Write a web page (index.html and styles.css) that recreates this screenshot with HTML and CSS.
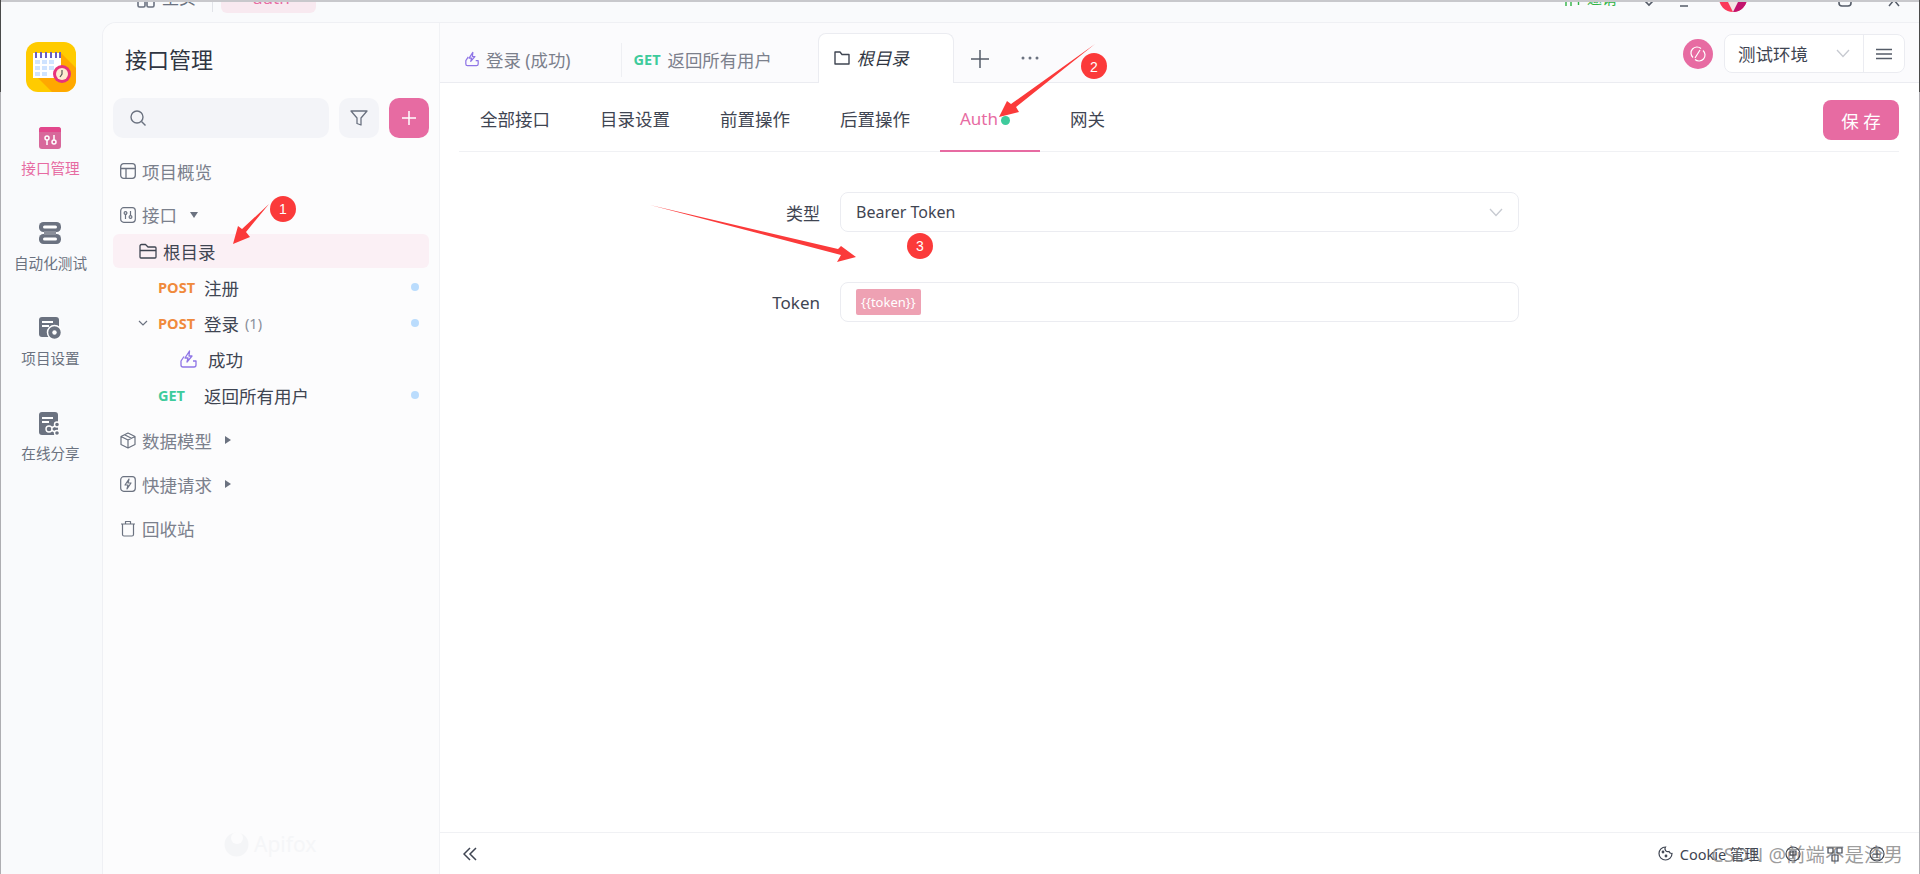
FILE: index.html
```html
<!DOCTYPE html>
<html lang="zh-CN">
<head>
  <meta charset="UTF-8" />
  <title>接口管理</title>
  <link rel="stylesheet" href="styles.css">
</head>
<body>
<div class="screen">

  <!-- window strip, cut off by the top of the shot -->
  <header class="topbar">
    <svg class="home-ico" width="18" height="24" viewBox="0 0 18 24" fill="none" stroke="#6b7280" stroke-width="1.6"><rect x="1" y="3" width="7" height="18" rx="1.5"/><rect x="10" y="3" width="7" height="18" rx="1.5"/></svg>
    <span class="top-home">主页</span>
    <i class="top-sep"></i>
    <span class="top-tab">auth</span>
    <svg class="top-add" width="18" height="24" viewBox="0 0 18 24" fill="none" stroke="#2fb344" stroke-width="1.4"><path d="M1 20v-8h5v8M10 15h7M13.500 11v8"/></svg>
    <span class="top-invite">邀请</span>
    <svg class="top-ico ico-a" width="20" height="24" viewBox="0 0 20 24" fill="none" stroke="#555c68" stroke-width="1.6"><path d="M3 12l7 7 7-7"/></svg>
    <svg class="top-ico ico-b" width="20" height="24" viewBox="0 0 20 24" fill="none" stroke="#555c68" stroke-width="1.6"><path d="M3 15h14M6 20h8"/></svg>
    <svg class="top-avatar" width="30" height="30" viewBox="0 0 30 30"><circle cx="15" cy="15" r="14" fill="#fb3a5a"/><path d="M15 1a14 14 0 0 1 0 28z" fill="#c2136e"/><path d="M9 17h12l-6 12z" fill="#f3e6e6"/></svg>
    <svg class="top-ico ico-c" width="16" height="24" viewBox="0 0 16 24" fill="none" stroke="#555c68" stroke-width="1.6"><rect x="2" y="4" width="12" height="16" rx="3"/></svg>
    <svg class="top-ico ico-d" width="14" height="24" viewBox="0 0 14 24" fill="none" stroke="#555c68" stroke-width="1.5"><path d="M2 20L7 14l5 6"/></svg>
  </header>

  <div class="shell">
    <!-- left rail -->
    <nav class="rail">
      <svg class="logo" width="50" height="50" viewBox="0 0 50 50">
        <rect width="50" height="50" rx="12" fill="#ffcb00"/>
        <path d="M34 10l16 16v12a12 12 0 0 1-12 12H26L7 31z" fill="#ffa800"/>
        <rect x="7" y="11" width="28" height="25" fill="#fff"/>
        <g fill="#cfe3ff"><rect x="9" y="18" width="5" height="4"/><rect x="16" y="18" width="5" height="4"/><rect x="23" y="18" width="5" height="4"/><rect x="9" y="24" width="5" height="4"/><rect x="16" y="24" width="5" height="4"/><rect x="23" y="24" width="5" height="4"/><rect x="9" y="30" width="5" height="4"/><rect x="16" y="30" width="5" height="4"/></g>
        <g fill="#6a5fc1"><rect x="9" y="10" width="2" height="6"/><rect x="14" y="10" width="2" height="6"/><rect x="19" y="10" width="2" height="6"/><rect x="24" y="10" width="2" height="6"/><rect x="29" y="10" width="2" height="6"/><rect x="33" y="10" width="2" height="6"/></g>
        <circle cx="36" cy="32" r="9" fill="#e8337a"/>
        <circle cx="36" cy="32" r="6" fill="#fdebd0"/>
        <path d="M36 28v4l-2 3" stroke="#555" stroke-width="1.2" fill="none"/>
      </svg>

      <a class="rail-item rail-on">
        <svg width="22" height="22" viewBox="0 0 22 22"><rect y="0" width="22" height="22" rx="3" fill="#d8689b"/><path d="M0 5V3a3 3 0 0 1 3-3h16a3 3 0 0 1 3 3v2z" fill="#e2478c"/><g stroke="#fff" stroke-width="1.5" fill="none"><circle cx="8" cy="11" r="2"/><path d="M8 13v5M15 8v5"/><circle cx="15" cy="15" r="2"/></g></svg>
        <span>接口管理</span>
      </a>
      <a class="rail-item">
        <svg width="22" height="22" viewBox="0 0 22 22"><rect width="22" height="10" rx="4.5" fill="#6b7280"/><rect y="12" width="22" height="10" rx="4.5" fill="#6b7280"/><rect x="4" y="3.500" width="14" height="3" rx="1.500" fill="#fff"/><rect x="4" y="15.500" width="14" height="3" rx="1.500" fill="#fff"/><rect x="5" y="9" width="12" height="4" fill="#8a8f9a"/></svg>
        <span>自动化测试</span>
      </a>
      <a class="rail-item">
        <svg width="22" height="22" viewBox="0 0 22 22"><rect width="20" height="20" rx="3" fill="#6b7280"/><rect x="3" y="4" width="11" height="2" fill="#fff"/><rect x="3" y="8" width="7" height="2" fill="#fff"/><circle cx="15.5" cy="15.5" r="7" fill="#6b7280" stroke="#fff" stroke-width="1.5"/><circle cx="15.5" cy="15.5" r="2.2" fill="#fff"/></svg>
        <span>项目设置</span>
      </a>
      <a class="rail-item rail-tall">
        <svg width="22" height="24" viewBox="0 0 22 24"><rect width="19" height="23" rx="3" fill="#6b7280"/><rect x="3" y="5" width="11" height="2" fill="#fff"/><rect x="3" y="9" width="7" height="2" fill="#fff"/><g stroke="#fff" stroke-width="1.4" fill="#6b7280"><path d="M10 17l8-4M10 17l8 4"/><circle cx="10" cy="17" r="3"/><circle cx="18" cy="12.5" r="2.5"/><circle cx="18" cy="21" r="2.5"/></g></svg>
        <span>在线分享</span>
      </a>
    </nav>

    <div class="panel">
      <!-- tree column -->
      <aside class="sidebar">
        <h2 class="side-title">接口管理</h2>
        <div class="toolbar">
          <div class="search">
            <svg width="18" height="18" viewBox="0 0 18 18" fill="none" stroke="#6b7280" stroke-width="1.4"><circle cx="8" cy="8" r="6"/><path d="M12.5 12.5l4 4"/></svg>
          </div>
          <button class="tool-btn">
            <svg width="18" height="18" viewBox="0 0 18 18" fill="none" stroke="#6b7280" stroke-width="1.3" stroke-linejoin="round"><path d="M1 2h16l-6 7v7l-4-1.5V9z"/></svg>
          </button>
          <button class="tool-btn tool-add">
            <svg width="16" height="16" viewBox="0 0 16 16" stroke="#fff" stroke-width="1.5"><path d="M8 1v14M1 8h14"/></svg>
          </button>
        </div>

        <ul class="tree">
          <li class="row row-top row-tall">
            <svg width="16" height="16" viewBox="0 0 16 16" fill="none" stroke="#6b7280" stroke-width="1.3"><rect x=".7" y=".7" width="14.6" height="14.6" rx="3"/><path d="M1 5.5h14M6 5.5V15"/></svg>
            <span>项目概览</span>
          </li>
          <li class="row row-top row-api">
            <svg width="16" height="16" viewBox="0 0 16 16" fill="none" stroke="#6b7280" stroke-width="1.2"><rect x=".7" y=".7" width="14.6" height="14.6" rx="3"/><circle cx="5.5" cy="6" r="1.4"/><path d="M5.5 7.5V12M10.5 4v4.500"/><circle cx="10.500" cy="10" r="1.400"/></svg>
            <span>接口</span>
            <i class="caret-down"></i>
          </li>
          <li class="row row-folder">
            <svg width="18" height="16" viewBox="0 0 18 16" fill="none" stroke="#3f4552" stroke-width="1.300" stroke-linejoin="round"><path d="M1 14V3a1.500 1.500 0 0 1 1.500-1.500h4L9 4h7a1 1 0 0 1 1 1v9a1 1 0 0 1-1 1H2a1 1 0 0 1-1-1zM1 7.500h16"/></svg>
            <span>根目录</span>
          </li>
          <li class="row row-api-item">
            <b class="method post">POST</b><span>注册</span><i class="dot"></i>
          </li>
          <li class="row row-api-open">
            <svg class="chevron" width="10" height="6" viewBox="0 0 10 6" fill="none" stroke="#6b7280" stroke-width="1.200"><path d="M1 1l4 4 4-4"/></svg>
            <b class="method post">POST</b><span>登录</span><em class="count">(1)</em><i class="dot"></i>
          </li>
          <li class="row row-case">
            <svg width="17" height="18" viewBox="0 0 17 18" fill="none" stroke="#8f75e6" stroke-width="1.300" stroke-linejoin="round"><path d="M9.500 1L5 8h3l-1 4 5-6H9z"/><path d="M4 6.500L1 11v4a2 2 0 0 0 2 2h11a2 2 0 0 0 2-2v-4h-3"/></svg>
            <span>成功</span>
          </li>
          <li class="row row-api-item">
            <b class="method get">GET</b><span>返回所有用户</span><i class="dot"></i>
          </li>
          <li class="row row-top row-tall row-after">
            <svg width="16" height="17" viewBox="0 0 16 17" fill="none" stroke="#6b7280" stroke-width="1.200" stroke-linejoin="round"><path d="M8 1l7 3.500v8L8 16l-7-3.500v-8zM1 4.500L8 8l7-3.500M8 8v8M4.500 2.800l7 3.500"/></svg>
            <span>数据模型</span>
            <i class="caret-right"></i>
          </li>
          <li class="row row-top row-tall">
            <svg width="16" height="16" viewBox="0 0 16 16" fill="none" stroke="#6b7280" stroke-width="1.200" stroke-linejoin="round"><rect x=".7" y=".7" width="14.600" height="14.600" rx="3"/><path d="M9 3L5 9h3l-1 4 4-6H8z"/></svg>
            <span>快捷请求</span>
            <i class="caret-right"></i>
          </li>
          <li class="row row-top row-tall">
            <svg width="16" height="17" viewBox="0 0 16 17" fill="none" stroke="#6b7280" stroke-width="1.200" stroke-linejoin="round"><path d="M1 4h14M5.500 4V1.500h5V4M2.500 4v10.500a1.500 1.500 0 0 0 1.500 1.500h8a1.500 1.500 0 0 0 1.500-1.500V4"/></svg>
            <span>回收站</span>
          </li>
        </ul>

        <div class="brand">
          <svg width="25" height="25" viewBox="0 0 25 25"><circle cx="12.500" cy="12.500" r="12" fill="#f4f5f7"/><circle cx="13" cy="6" r="6" fill="#fcfcfd"/></svg>
          <span>Apifox</span>
        </div>
      </aside>

      <!-- right side -->
      <main class="main">
        <div class="tabbar">
          <div class="doc-tab doc-login">
            <svg width="14" height="16" viewBox="0 0 17 18" fill="none" stroke="#8f75e6" stroke-width="1.500" stroke-linejoin="round"><path d="M9.500 1L5 8h3l-1 4 5-6H9z"/><path d="M4 6.500L1 11v4a2 2 0 0 0 2 2h11a2 2 0 0 0 2-2v-4h-3"/></svg>
            <span>登录 (成功)</span>
          </div>
          <i class="doc-sep"></i>
          <div class="doc-tab doc-get">
            <b class="method get">GET</b>
            <span>返回所有用户</span>
          </div>
          <div class="doc-tab doc-active">
            <svg width="16" height="14" viewBox="0 0 16 14" fill="none" stroke="#3f4552" stroke-width="1.400" stroke-linejoin="round"><path d="M1 13V1h5l2 2.500h7V13z"/></svg>
            <span>根目录</span>
          </div>
          <svg class="tab-plus" width="18" height="18" viewBox="0 0 18 18" stroke="#555c68" stroke-width="1.500"><path d="M9 0v18M0 9h18"/></svg>
          <svg class="tab-more" width="18" height="4" viewBox="0 0 18 4" fill="#6b7280"><circle cx="2" cy="2" r="1.500"/><circle cx="9" cy="2" r="1.500"/><circle cx="16" cy="2" r="1.500"/></svg>

          <div class="env">
            <span class="sync">
              <svg width="16" height="16" viewBox="0 0 16 16" fill="none" stroke="#fff" stroke-width="1.200"><path d="M3 11.500A6 6 0 0 1 11 2.500M13 4.500A6 6 0 0 1 5 13.500M5 12l5-8"/></svg>
            </span>
            <div class="env-box">
              <div class="env-select">
                <span>测试环境</span>
                <svg width="14" height="9" viewBox="0 0 14 9" fill="none" stroke="#c7cad1" stroke-width="1.300"><path d="M1 1l6 6.500L13 1"/></svg>
              </div>
              <div class="env-menu">
                <svg width="16" height="12" viewBox="0 0 16 12" stroke="#555c68" stroke-width="1.600"><path d="M0 1.500h16M0 6h16M0 10.500h16"/></svg>
              </div>
            </div>
          </div>
        </div>

        <div class="subbar">
          <a class="sub-tab">全部接口</a>
          <a class="sub-tab">目录设置</a>
          <a class="sub-tab">前置操作</a>
          <a class="sub-tab">后置操作</a>
          <a class="sub-tab sub-on">Auth<i class="green-dot"></i></a>
          <a class="sub-tab">网关</a>
          <button class="save">保 存</button>
        </div>

        <form class="auth-form">
          <label>类型</label>
          <div class="field field-select">
            <span>Bearer Token</span>
            <svg width="14" height="9" viewBox="0 0 14 9" fill="none" stroke="#c7cad1" stroke-width="1.300"><path d="M1 1l6 6.500L13 1"/></svg>
          </div>
          <label>Token</label>
          <div class="field">
            <span class="var-tag">{{token}}</span>
          </div>
        </form>

        <footer class="statusbar">
          <svg width="14" height="14" viewBox="0 0 14 14" fill="none" stroke="#3f4552" stroke-width="1.500"><path d="M7 1L1 7l6 6M13 1L7 7l6 6"/></svg>
          <div class="status-right">
            <svg width="15" height="15" viewBox="0 0 15 15" fill="none" stroke="#3f4552" stroke-width="1.200"><path d="M7.500 1a6.500 6.500 0 1 0 6.500 6.500 3 3 0 0 1-3-2 3 3 0 0 1-3.500-4.500z"/><circle cx="5" cy="6" r=".8"/><circle cx="8" cy="10" r=".8"/></svg>
            <span class="cookie">Cookie 管理</span>
            <svg class="st-ico st-first" width="16" height="16" viewBox="0 0 16 16" fill="none" stroke="#3f4552" stroke-width="1.200"><circle cx="8" cy="8" r="7"/><path d="M5 5h6v4H5zM8 5v7"/></svg>
            <svg class="st-ico" width="16" height="16" viewBox="0 0 16 16" fill="none" stroke="#3f4552" stroke-width="1.200"><path d="M1 2h5v5H1zM10 2h5v5h-5zM5 9h6v6H5z"/></svg>
            <svg class="st-ico" width="16" height="16" viewBox="0 0 16 16" fill="none" stroke="#3f4552" stroke-width="1.200"><circle cx="8" cy="8" r="7"/><path d="M4 8h8M8 4v8"/></svg>
          </div>
        </footer>
      </main>
    </div>
  </div>

  <!-- red marks drawn over the shot -->
  <svg class="marks" width="1920" height="874" viewBox="0 0 1920 874">
    <g fill="#fb3a3a">
      <path d="M269 204L246 232 250 237 233 244 238 226 242 229z"/>
      <path d="M1095 44L1016 107 1019 112 999 117 1007 101 1011 104z"/>
      <path d="M650 205L838 249 841 246 856 257 837 262 841 255z"/>
      <circle cx="283" cy="209" r="13"/>
      <circle cx="1094" cy="66" r="13"/>
      <circle cx="920" cy="246" r="13"/>
    </g>
    <g class="mark-num" fill="#fff" text-anchor="middle">
      <text x="283" y="214">1</text>
      <text x="1094" y="72">2</text>
      <text x="920" y="251">3</text>
    </g>
  </svg>

  <span class="watermark">CSDN @前端不是渣男</span>
</div>
</body>
</html>
```

FILE: styles.css
```css
* {
  box-sizing: border-box;
}
html, body {
  margin: 0;
  height: 874px;
  overflow: hidden;
}
body {
  padding: 0 1px;
  background: linear-gradient(#4a4a4a 0 92px, #aeaeb2 92px);
  font-family: "Noto Sans", "Noto Sans CJK SC", sans-serif;
  color: #3f4552;
}
ul {
  list-style: none;
  margin: 0;
  padding: 0;
}
button {
  border: none;
  font-family: inherit;
  cursor: pointer;
}
.screen {
  position: relative;
  display: flex;
  flex-direction: column;
  height: 874px;
  background: #f9fafc;
  border-top: 2px solid #c8c8cc;
}

/* top strip */
.topbar {
  position: relative;
  flex: none;
  display: flex;
  height: 20px;
  overflow: hidden;
  padding-left: 136px;
  font-size: 17px;
  line-height: 24px;
  color: #6b7280;
}
.topbar > * {
  flex: none;
  margin-top: -16px;
}
.top-home {
  margin-left: 7px;
}
.top-sep {
  width: 1px;
  height: 26px;
  margin-left: 16px;
  background: #e1e3e8;
}
.top-tab {
  width: 95px;
  height: 27px;
  margin-left: 8px;
  padding-left: 32px;
  border-radius: 6px;
  background: #f8e9f0;
  color: #e76ba2;
}
.top-add {
  margin-left: 1249px;
}
.top-invite {
  margin-left: 4px;
  color: #2fb344;
  font-size: 15px;
}
.ico-a {
  margin-left: 22px;
}
.ico-b {
  margin-left: 15px;
}
.topbar .top-avatar {
  margin-top: -19px;
  margin-left: 24px;
}
.ico-c {
  margin-left: 89px;
}
.ico-d {
  margin-left: 34px;
}

.shell {
  flex: 1;
  display: flex;
  min-height: 0;
}

/* rail */
.rail {
  flex: none;
  width: 101px;
  display: flex;
  flex-direction: column;
  align-items: center;
  padding: 20px 2px 0 0;
}
.logo {
  margin-bottom: 28px;
}
.rail-item {
  display: flex;
  flex-direction: column;
  align-items: center;
  gap: 8px;
  height: 95px;
  padding-top: 7px;
  font-size: 14.6px;
  line-height: 22px;
  color: #6b7280;
}
.rail-tall {
  gap: 6px;
}
.rail-on {
  color: #e76ba2;
}

.panel {
  flex: 1;
  display: flex;
  min-width: 0;
  border-top: 1px solid #eff0f4;
  border-left: 1px solid #eff0f4;
  border-top-left-radius: 14px;
  overflow: hidden;
}

/* tree column */
.sidebar {
  position: relative;
  flex: none;
  width: 337px;
  padding: 0 10px;
  background: #fcfcfd;
  border-right: 1px solid #f1f2f5;
}
.side-title {
  margin: 0;
  padding-left: 12px;
  height: 75px;
  font-size: 22px;
  font-weight: 400;
  line-height: 73px;
  color: #2f3542;
}
.toolbar {
  display: flex;
  gap: 10px;
  height: 40px;
}
.search {
  flex: 1;
  display: flex;
  align-items: center;
  padding-left: 16px;
  border-radius: 10px;
  background: #f3f4f8;
}
.tool-btn {
  width: 40px;
  height: 40px;
  padding: 0;
  display: flex;
  align-items: center;
  justify-content: center;
  border-radius: 10px;
  background: #f3f4f8;
}
.tool-add {
  background: #e76ba2;
}
.tree {
  margin-top: 11px;
}
.row {
  display: flex;
  align-items: center;
  height: 36px;
  font-size: 17.5px;
  color: #3f4552;
}
.row-top {
  padding-left: 7px;
  gap: 6px;
  color: #7b808c;
}
.row-tall {
  height: 44px;
}
.row-api {
  height: 41px;
  padding-bottom: 1px;
  padding-top: 3px;
}
.row-after {
  margin-top: 5px;
}
.caret-down {
  width: 0;
  height: 0;
  margin-left: 7px;
  border: 4px solid transparent;
  border-top: 6px solid #6b7280;
  border-bottom: 0;
}
.caret-right {
  width: 0;
  height: 0;
  margin-left: 7px;
  border: 4px solid transparent;
  border-left: 6px solid #6b7280;
  border-right: 0;
}
.row-folder {
  height: 34px;
  margin-bottom: 1px;
  padding-left: 26px;
  gap: 6px;
  border-radius: 6px;
  background: #fbf0f5;
}
.row-api-item {
  padding-left: 45px;
}
.row-api-open {
  padding-left: 25px;
}
.chevron {
  margin-right: 10px;
}
.row-case {
  padding-left: 67px;
  gap: 11px;
}
.method {
  flex: none;
  width: 46px;
  font-family: "Open Sans", sans-serif;
  font-size: 14.5px;
  font-weight: 700;
}
.post {
  color: #f08a3c;
}
.get {
  color: #3ecb9c;
}
.count {
  margin-left: 6px;
  font-size: 14.5px;
  font-style: normal;
  color: #8a8f9a;
}
.dot {
  width: 8px;
  height: 8px;
  margin-left: auto;
  margin-right: 10px;
  border-radius: 50%;
  background: #badcfd;
}
.brand {
  position: absolute;
  left: 121px;
  bottom: 17px;
  display: flex;
  align-items: center;
  gap: 5px;
  font-size: 21px;
  line-height: 25px;
  color: #f5f6f8;
}

/* main */
.main {
  flex: 1;
  min-width: 0;
  display: flex;
  flex-direction: column;
  background: #fff;
}
.tabbar {
  flex: none;
  display: flex;
  align-items: flex-end;
  height: 60px;
  padding: 0 14px 0 25px;
  background: #fbfbfd;
  border-bottom: 1px solid #ebecf1;
}
.doc-tab {
  display: flex;
  align-items: center;
  height: 40px;
  margin-bottom: 3px;
  font-size: 17.4px;
  color: #7b808c;
}
.doc-login {
  gap: 7px;
}
.doc-sep {
  width: 1px;
  height: 34px;
  margin: 0 0 5px 50px;
  background: #eeeff3;
}
.doc-get {
  margin-left: 12px;
  width: 184px;
}
.doc-get .method {
  width: 34px;
}
.doc-active {
  gap: 7px;
  width: 136px;
  height: 50px;
  margin-bottom: -1px;
  padding: 0 0 2px 15px;
  border: 1px solid #ebecf1;
  border-bottom: none;
  border-radius: 8px 8px 0 0;
  background: #fff;
  color: #2f3542;
  font-style: italic;
}
.tab-plus {
  margin: 0 0 14px 17px;
}
.tab-more {
  margin: 0 0 22px 32px;
}
.env {
  display: flex;
  align-items: center;
  gap: 11px;
  margin: 0 0 9px auto;
}
.sync {
  display: flex;
  align-items: center;
  justify-content: center;
  width: 30px;
  height: 30px;
  border-radius: 50%;
  background: #e76ba2;
}
.env-box {
  display: flex;
  width: 181px;
  height: 39px;
  border: 1px solid #ebecf1;
  border-radius: 8px;
  background: #fff;
}
.env-select {
  flex: 1;
  display: flex;
  align-items: center;
  justify-content: space-between;
  padding: 0 13px 0 13px;
  font-size: 17.5px;
  border-right: 1px solid #ebecf1;
}
.env-menu {
  width: 40px;
  display: flex;
  align-items: center;
  justify-content: center;
}
.subbar {
  flex: none;
  display: flex;
  gap: 10px;
  height: 69px;
  margin: 0 20px 0 19px;
  border-bottom: 1px solid #f0f1f4;
}
.sub-tab {
  position: relative;
  display: block;
  height: 69px;
  padding: 24px 20px 0;
  font-size: 17.5px;
  line-height: 24px;
  color: #3f4552;
  white-space: nowrap;
}
.sub-tab:first-child {
  margin-left: 1px;
}
.sub-on {
  width: 100px;
  font-size: 17px;
  color: #e76ba2;
  border-bottom: 2px solid #e76ba2;
}
.green-dot {
  position: absolute;
  top: 33px;
  left: 61px;
  width: 9px;
  height: 9px;
  border-radius: 50%;
  background: #3ecb9c;
}
.save {
  align-self: flex-start;
  width: 76px;
  height: 40px;
  margin: 17px 0 0 auto;
  border-radius: 8px;
  background: #e76ba2;
  color: #fff;
  font-size: 17.500px;
}
.auth-form {
  display: grid;
  grid-template-columns: 380px 679px;
  column-gap: 20px;
  row-gap: 50px;
  align-items: center;
  margin-top: 40px;
}
.auth-form label {
  text-align: right;
  font-size: 17px;
  color: #3f4552;
}
.field {
  display: flex;
  align-items: center;
  justify-content: space-between;
  height: 40px;
  padding: 0 15px;
  border: 1px solid #ebecf1;
  border-radius: 8px;
  font-size: 16px;
  color: #3f4552;
}
.var-tag {
  padding: 0 5px;
  height: 26px;
  line-height: 27px;
  border-radius: 2px;
  background: #eea1b3;
  color: #fff;
  font-size: 13px;
}
.statusbar {
  flex: none;
  display: flex;
  align-items: center;
  justify-content: space-between;
  height: 42px;
  margin-top: auto;
  padding: 0 34px 0 23px;
  border-top: 1px solid #f0f1f4;
}
.status-right {
  display: flex;
  align-items: center;
}
.cookie {
  margin-left: 7px;
  font-size: 14.500px;
}
.st-ico {
  margin-left: 26px;
}
.st-first {
  margin-left: 26px;
}

/* marks over the shot */
.marks {
  position: absolute;
  top: -2px;
  left: -1px;
  pointer-events: none;
}
.mark-num {
  font-family: "Liberation Sans", sans-serif;
  font-size: 14px;
}
.watermark {
  position: absolute;
  right: 16px;
  bottom: 6px;
  font-size: 19.500px;
  line-height: 26px;
  color: rgba(90, 90, 90, 0.6);
  pointer-events: none;
}
```
